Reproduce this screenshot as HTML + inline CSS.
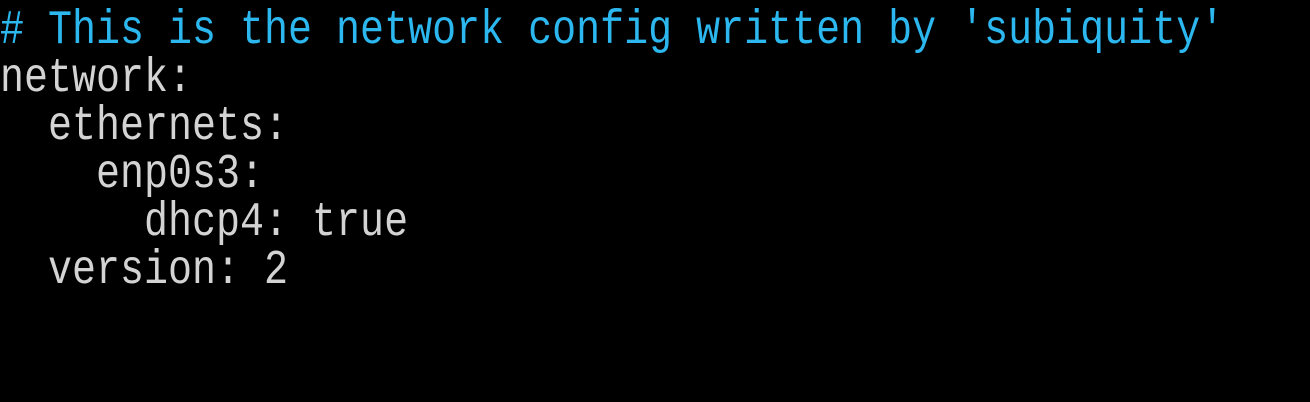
<!DOCTYPE html>
<html><head><meta charset="utf-8"><style>
html,body{margin:0;padding:0;background:#000;width:1310px;height:402px;overflow:hidden}
pre{margin:0;position:absolute;left:0;top:8px;font-family:"Liberation Mono",monospace;font-size:40px;line-height:40px;color:#d3d3d3;transform:scale(1,1.2);transform-origin:0 0;white-space:pre}
.c{color:#2cb7ef}
</style></head><body>
<pre><span class="c"># This is the network config written by 'subiquity'</span>
network:
  ethernets:
    enp0s3:
      dhcp4: true
  version: 2</pre>
</body></html>
